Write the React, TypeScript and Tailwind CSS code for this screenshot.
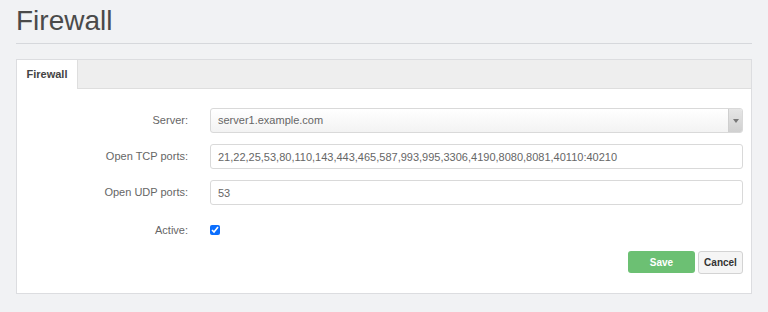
import React from 'react';

const labelCls = 'w-[171px] text-right text-[11px] text-[#666]';
const inputCls =
  'h-[25px] flex-1 rounded-[3px] border border-[#d9d9d9] bg-white px-[7px] text-[11px] text-[#666] outline-none';

export default function App() {
  return (
    <div className="min-h-[312px] bg-[#f1f2f4] px-4 pt-[3px] font-['Liberation_Sans',Arial,sans-serif]">
      <h1 className="text-[28px] leading-[36px] font-normal text-[#4a4a4a]">Firewall</h1>
      <div className="mt-[4px] border-b border-[#d6d8dc]" />

      <div className="mt-[15px] w-[736px] border border-[#dcdde0] bg-white">
        {/* tabs */}
        <div className="flex h-[29px] bg-[#eeeeee] border-b border-[#dedede]">
          <div className="-mb-px flex w-[61px] items-center justify-center border-r border-[#dedede] bg-white text-[11px] font-bold text-[#444]">
            Firewall
          </div>
        </div>

        <div className="pt-[19px] pr-[8px] pb-[19px]">
          <div className="flex items-center gap-[22px]">
            <label className={labelCls}>Server:</label>
            <div className="flex h-[25px] flex-1 overflow-hidden rounded-[3px] border border-[#d9d9d9] bg-gradient-to-b from-white to-[#f3f3f3]">
              <span className="flex flex-1 items-center px-[7px] text-[11px] text-[#666]">server1.example.com</span>
              <span className="flex w-[14px] items-center justify-center border-l border-[#cfcfcf] bg-gradient-to-b from-[#e6e6e6] to-[#d0d0d0]">
                <svg width="6" height="4" viewBox="0 0 6 4">
                  <path d="M0 0h6L3 4z" fill="#777" />
                </svg>
              </span>
            </div>
          </div>

          <div className="mt-[11px] flex items-center gap-[22px]">
            <label className={labelCls}>Open TCP ports:</label>
            <input
              className={inputCls}
              defaultValue="21,22,25,53,80,110,143,443,465,587,993,995,3306,4190,8080,8081,40110:40210"
            />
          </div>

          <div className="mt-[11px] flex items-center gap-[22px]">
            <label className={labelCls}>Open UDP ports:</label>
            <input className={inputCls} defaultValue="53" />
          </div>

          <div className="mt-[17px] flex items-center gap-[22px]">
            <label className={labelCls}>Active:</label>
            <input type="checkbox" defaultChecked className="h-[10px] w-[10px] accent-[#0b6efd]" />
          </div>

          <div className="mt-[12px] flex items-center justify-end gap-[3px]">
            <button className="h-[22px] w-[67px] rounded-[3px] bg-[#6cc073] text-[10px] font-bold text-white">
              Save
            </button>
            <button className="h-[23px] w-[45px] rounded-[3px] border border-[#d3d3d3] bg-[#f5f5f5] text-[10px] font-bold text-[#333]">
              Cancel
            </button>
          </div>
        </div>
      </div>
    </div>
  );
}
